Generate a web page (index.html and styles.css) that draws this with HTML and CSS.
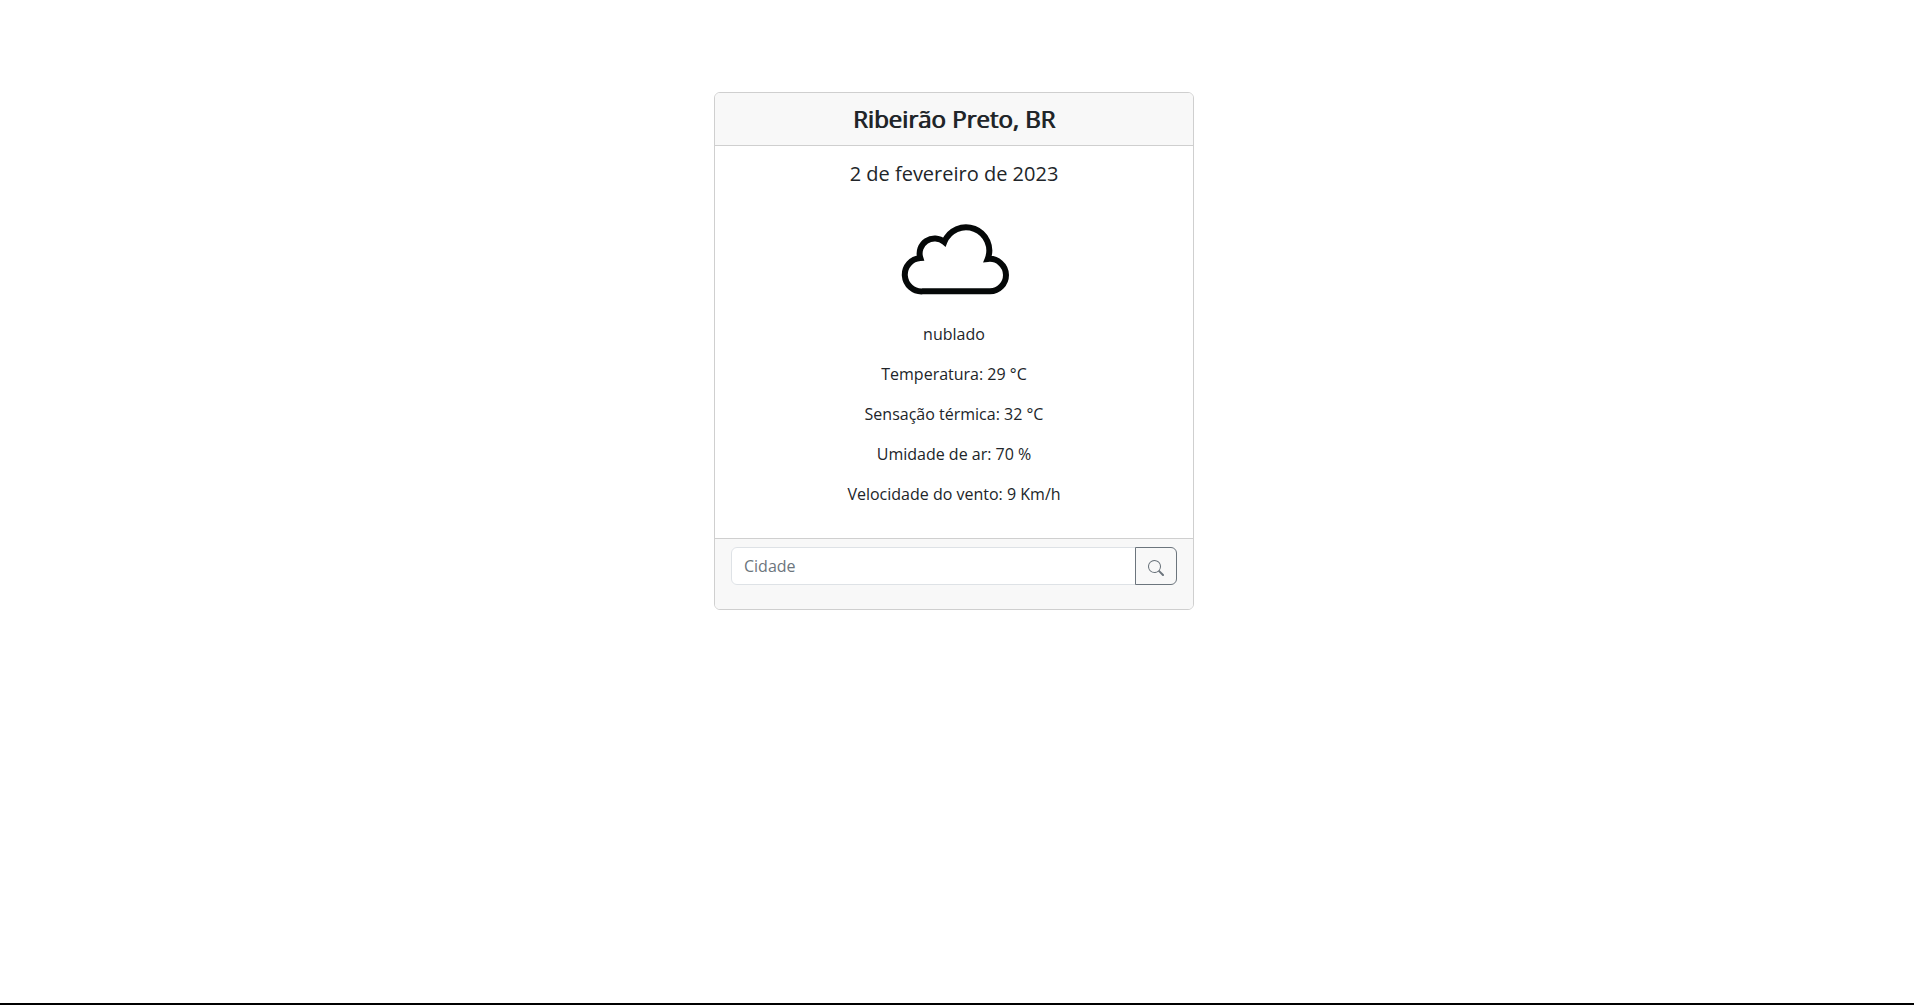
FILE: index.html
```html
<!DOCTYPE html>
<html lang="pt-BR">
<head>
  <meta charset="utf-8">
  <meta name="viewport" content="width=device-width, initial-scale=1">
  <title>Clima</title>
  <link rel="stylesheet" href="styles.css">
</head>
<body>
  <main class="page">
    <article class="card">
      <header class="card-header">
        <h1 class="city">Ribeirão Preto, BR</h1>
      </header>
      <section class="card-body">
        <h2 class="date">2 de fevereiro de 2023</h2>
        <svg class="weather-icon" viewBox="0 -48 384 384" role="img" aria-label="nublado">
          <path d="M98 244H300A49 49 0 0 0 348 195A49 49 0 0 0 293 147A69 69 0 1 0 163 96A45 45 0 0 0 91 144A50 50 0 0 0 98 244Z" fill="none" stroke="#050808" stroke-width="18"/>
        </svg>
        <p class="reading">nublado</p>
        <p class="reading">Temperatura: 29 °C</p>
        <p class="reading">Sensação térmica: 32 °C</p>
        <p class="reading">Umidade de ar: 70 %</p>
        <p class="reading">Velocidade do vento: 9 Km/h</p>
      </section>
      <footer class="card-footer">
        <form class="search">
          <input class="search-input" type="text" placeholder="Cidade" aria-label="Cidade">
          <button class="search-button" type="button" aria-label="Buscar">
            <svg class="search-icon" viewBox="0 0 16 16" fill="currentColor" aria-hidden="true">
              <path d="M11.742 10.344a6.5 6.5 0 1 0-1.397 1.398h-.001c.03.04.062.078.098.115l3.85 3.85a1 1 0 0 0 1.415-1.414l-3.85-3.85a1.007 1.007 0 0 0-.115-.1zM12 6.5a5.5 5.5 0 1 1-11 0 5.5 5.5 0 0 1 11 0z"/>
            </svg>
          </button>
        </form>
      </footer>
    </article>
  </main>
</body>
</html>
```
FILE: styles.css
```css
* {
  box-sizing: border-box;
}

body {
  margin: 0;
  background: #fff;
  color: #212529;
  font-family: "Open Sans", "Noto Sans", sans-serif;
  font-size: 16px;
  line-height: 24px;
}

.page {
  min-height: 100vh;
  padding: 92px 6px 16px 0;
  border-bottom: 2px solid #000;
}

.card {
  max-width: 480px;
  margin: 0 auto;
  border: 1px solid #cfcfcf;
  border-radius: 6px;
  overflow: hidden;
  text-align: center;
}

.card-header {
  padding: 8px 16px;
  background: #f8f8f8;
  border-bottom: 1px solid #cfcfcf;
}

.city {
  margin: 0;
  font-size: 24px;
  font-weight: 400;
  line-height: 36px;
  text-shadow: 1px 0 0 currentColor;
}

.card-body {
  padding: 16px;
}

.date {
  margin: 0 0 8px;
  font-size: 20px;
  font-weight: 400;
  line-height: 24px;
}

.weather-icon {
  display: block;
  width: 128px;
  height: 128px;
  margin: 0 auto;
}

.reading {
  margin: 0 0 16px;
}

.card-footer {
  padding: 8px 16px 24px;
  background: #f8f8f8;
  border-top: 1px solid #cfcfcf;
}

.search {
  display: flex;
}

.search-input {
  flex: 1;
  min-width: 0;
  height: 38px;
  padding: 6px 12px;
  border: 1px solid #dee2e6;
  border-radius: 6px 0 0 6px;
  background: #fff;
  color: inherit;
  font: inherit;
}

.search-input::placeholder {
  color: #6c757d;
  opacity: 1;
}

.search-button {
  margin-left: -1px;
  padding: 6px 12px;
  border: 1px solid #6c757d;
  border-radius: 0 6px 6px 0;
  background: transparent;
  color: #6c757d;
  font: inherit;
}

.search-icon {
  width: 16px;
  height: 16px;
  vertical-align: -4px;
}
```
